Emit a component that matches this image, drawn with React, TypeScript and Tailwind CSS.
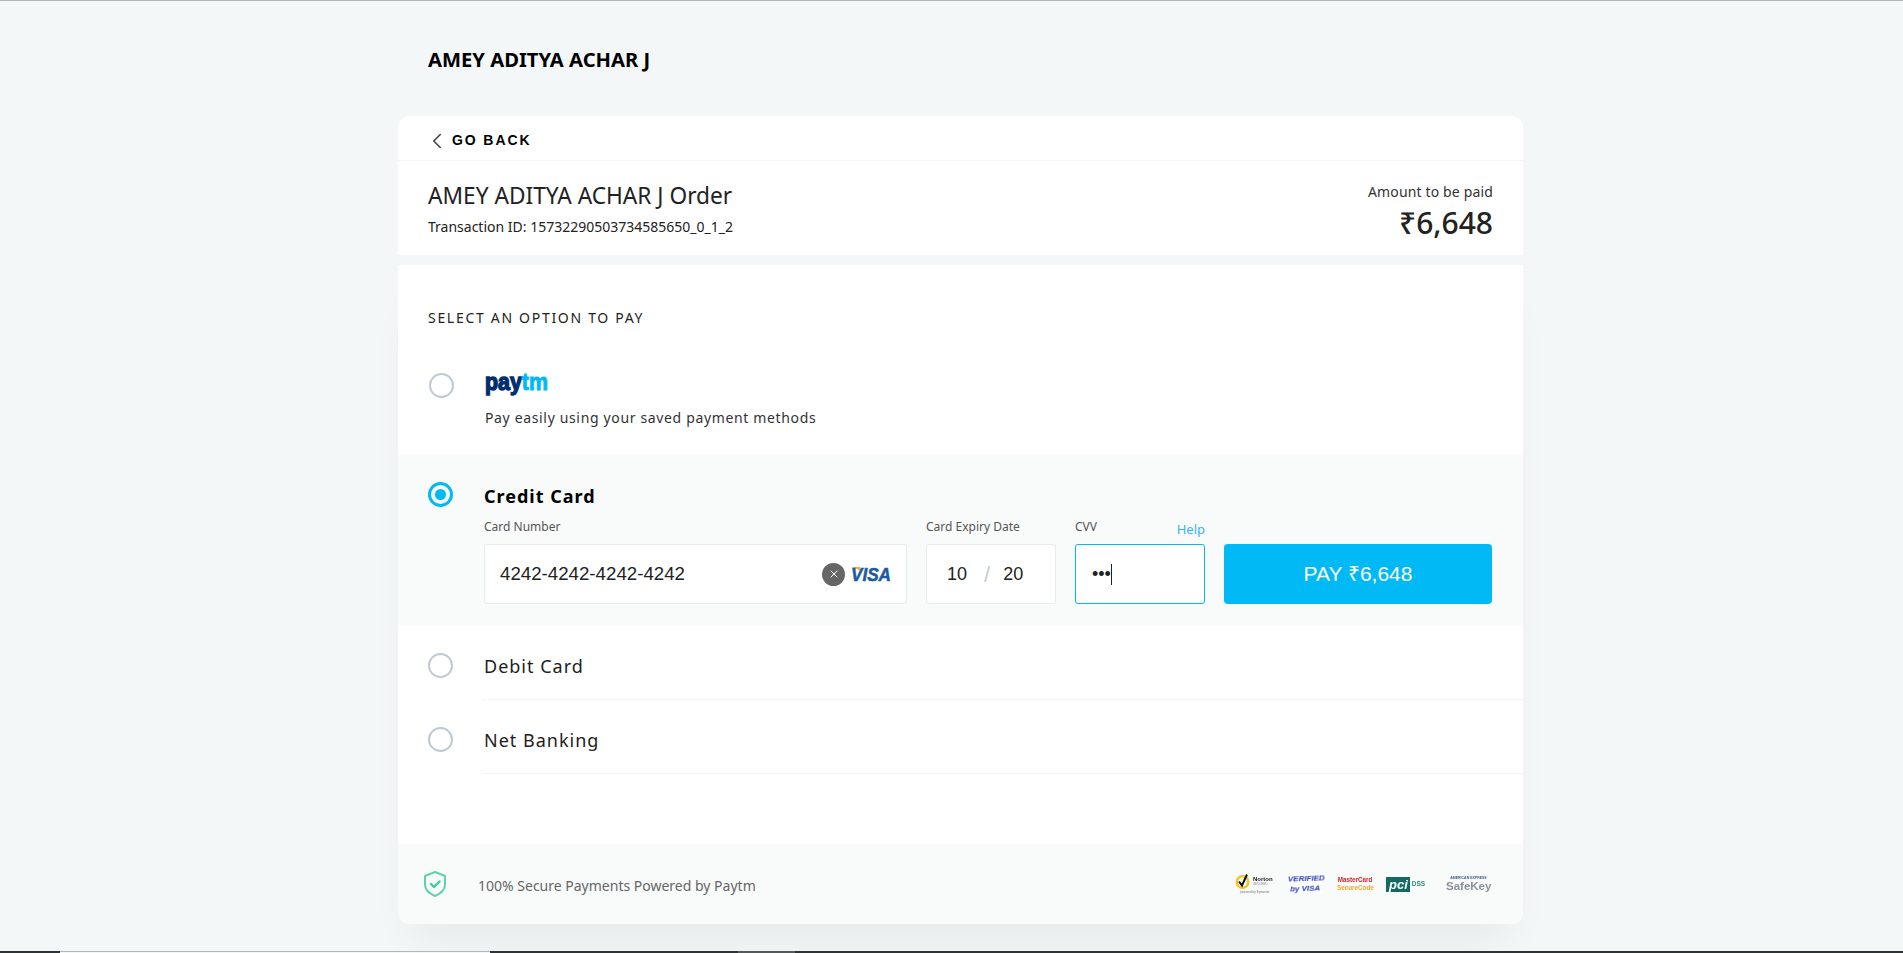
import { ChevronLeft, X } from "lucide-react";

function Radio({ checked = false }: { checked?: boolean }) {
  return (
    <span
      className={
        checked
          ? "flex h-[25px] w-[25px] shrink-0 items-center justify-center rounded-full border-[3px] border-[#00b9f5]"
          : "block h-[25px] w-[25px] shrink-0 rounded-full border-[2px] border-[#bfc9d4]"
      }
    >
      {checked && <span className="h-[11px] w-[11px] rounded-full bg-[#00b9f5]" />}
    </span>
  );
}

function PaytmLogo() {
  return (
    <svg width="66" height="22" viewBox="0 0 66 22" className="block overflow-visible">
      <text x="1" y="16" fontFamily="'Liberation Sans', sans-serif" fontWeight="700" fontSize="23" textLength="63" lengthAdjust="spacingAndGlyphs">
        <tspan fill="#002e6e" stroke="#002e6e" strokeWidth="1.4">pay</tspan>
        <tspan fill="#00b9f5" stroke="#00b9f5" strokeWidth="0.9">tm</tspan>
      </text>
    </svg>
  );
}

function VisaLogo() {
  return (
    <svg width="42" height="18" viewBox="0 0 42 18" className="overflow-visible">
      <path d="M1 2h9l1.5 5C9 4.5 5 3 1 2z" fill="#f2a93b" />
      <text x="1" y="16" fontFamily="'Liberation Sans', sans-serif" fontWeight="700" fontStyle="italic" fontSize="18" textLength="40" lengthAdjust="spacingAndGlyphs" fill="#1a5b9e" stroke="#1a5b9e" strokeWidth="0.5">VISA</text>
    </svg>
  );
}

function ShieldCheck() {
  return (
    <svg width="24" height="28" viewBox="0 0 24 28" fill="none">
      <path d="M12 2 22 6v8.5c0 5.5-4 9-10 11.5C6 23.5 2 20 2 14.5V6z" stroke="#5fd3a5" strokeWidth="2" strokeLinejoin="round" />
      <path d="m8 14 3 3 5.5-5.5" stroke="#3ecb90" strokeWidth="2.4" strokeLinecap="round" strokeLinejoin="round" />
    </svg>
  );
}

function NortonSeal() {
  return (
    <div className="w-[42px] blur-[0.5px]">
      <div className="flex items-center gap-[2px]">
        <svg width="17" height="17" viewBox="0 0 17 17" className="shrink-0">
          <circle cx="8.5" cy="9" r="7" fill="#f7c325" />
          <circle cx="8.5" cy="9" r="4.5" fill="#fff" />
          <path d="m5 8.5 3 4 5-11" stroke="#111" strokeWidth="2" fill="none" />
        </svg>
        <div className="leading-[5px]">
          <div className="text-[6px] font-bold text-[#222]">Norton</div>
          <div className="text-[3px] text-[#888]">SECURED</div>
        </div>
      </div>
      <div className="text-center text-[3px] leading-[5px] text-[#777]">powered by Symantec</div>
    </div>
  );
}

function TrustSeals() {
  return (
    <div className="flex items-center font-['Liberation_Sans',sans-serif]">
      <NortonSeal />
      <div className="ml-[12px] w-[34px] rotate-[-2deg] bg-white text-center text-[8px] leading-[10px] font-bold text-[#2a3bb0] italic blur-[0.5px]">
        <div>VERIFIED</div>
        <div>by VISA</div>
      </div>
      <div className="ml-[15px] w-[36px] text-center text-[6.3px] leading-[8px] font-bold blur-[0.5px]">
        <div className="text-[#d8222a]">MasterCard</div>
        <div className="text-[#f5a623]">SecureCode</div>
      </div>
      <div className="ml-[13px] flex w-[44px] items-center blur-[0.5px]">
        <span className="bg-[#116b63] pr-[2px] pl-[3px] text-[13px] leading-[15px] font-bold text-white italic">pci</span>
        <span className="ml-[2px] text-[6.5px] font-bold text-[#2f8a80]">DSS</span>
      </div>
      <div className="ml-[16px] w-[45px] text-center blur-[0.5px]">
        <div className="text-[3.5px] leading-[4px] font-bold text-[#3b5b8c]">AMERICAN EXPRESS</div>
        <div className="text-[11.5px] leading-[12px] font-bold text-[#8a9299]">SafeKey</div>
      </div>
    </div>
  );
}

function OptionRow({ label, first = false }: { label: string; first?: boolean }) {
  return (
    <div className="flex">
      <div className={`flex w-[84px] shrink-0 items-center pl-[30px] ${first ? "pt-[6px]" : "pt-[4px]"}`}>
        <Radio />
      </div>
      <div className={`flex flex-1 items-center border-b border-[#f3f5f6] pl-[2px] ${first ? "h-[75px] pt-[9px]" : "h-[74px] pt-[7px]"}`}>
        <span className="text-[18px] tracking-[1px] text-[#1d1d1d]">{label}</span>
      </div>
    </div>
  );
}

export default function App() {
  return (
    <div className="relative h-[953px] overflow-hidden border-t border-[#b4b6b8] bg-[#f3f7f8] font-['Noto_Sans',sans-serif] text-[#222222]">
      <div className="ml-[398px] w-[1125px]">
        <div className="flex h-[115px] items-start pt-[45px] pl-[30px]">
          <h1 className="text-[20.2px] leading-[26px] font-bold text-black">AMEY ADITYA ACHAR J</h1>
        </div>

        <div className="rounded-t-[12px] bg-white">
          <div className="flex h-[45px] items-center border-b border-[#f3f5f6] pt-[5px] pl-[26px]">
            <ChevronLeft size={26} strokeWidth={1.5} className="text-[#444444]" />
            <span className="ml-[2px] font-['Liberation_Sans',sans-serif] text-[14px] font-bold tracking-[1.9px] text-black">GO BACK</span>
          </div>
          <div className="flex h-[94px] justify-between px-[30px] pt-[21px]">
            <div>
              <div className="text-[22.7px] leading-[28px] text-[#222222]">AMEY ADITYA ACHAR J Order</div>
              <div className="mt-[7px] text-[14px] leading-[20px] text-[#222222]">Transaction ID: 15732290503734585650_0_1_2</div>
            </div>
            <div className="text-right">
              <div className="text-[14px] leading-[20px] tracking-[0.15px] text-[#333333]">Amount to be paid</div>
              <div className="mt-[3px] text-[30px] leading-[36px] font-medium text-[#222222]">₹6,648</div>
            </div>
          </div>
        </div>

        <div className="mt-[10px] flex h-[659px] flex-col rounded-b-[12px] bg-white shadow-[0_30px_40px_-15px_rgba(0,0,0,0.06)]">
          <div className="pt-[43px] pl-[30px] text-[14px] leading-[20px] tracking-[1.7px] text-[#222222]">SELECT AN OPTION TO PAY</div>

          <div className="mt-[44px] flex h-[83px]">
            <div className="w-[86px] shrink-0 pt-[1px] pl-[31px]">
              <Radio />
            </div>
            <div className="pt-[2px]">
              <PaytmLogo />
              <div className="mt-[12px] pl-[1px] text-[14px] leading-[20px] tracking-[0.65px] text-[#333333]">Pay easily using your saved payment methods</div>
            </div>
          </div>

          <div className="flex h-[170px] bg-[#f9fbfb]">
            <div className="w-[86px] shrink-0 pt-[27px] pl-[30px]">
              <Radio checked />
            </div>
            <div className="flex-1 pt-[29px] pr-[31px]">
              <div className="text-[18px] leading-[24px] font-bold tracking-[1px] text-black">Credit Card</div>
              <div className="mt-[10px] flex items-start">
                <div className="w-[423px]">
                  <div className="text-[12px] leading-[18px] text-[#555555]">Card Number</div>
                  <div className="mt-[8px] flex h-[60px] items-center rounded-[3px] border border-[#e8ebec] bg-white pr-[14px] pl-[15px]">
                    <span className="flex-1 font-['Liberation_Sans',sans-serif] text-[18.7px] text-[#222222]">4242-4242-4242-4242</span>
                    <span className="flex h-[23px] w-[23px] items-center justify-center rounded-full bg-[#666666] text-white">
                      <X size={12} strokeWidth={2} />
                    </span>
                    <span className="ml-[5px]"><VisaLogo /></span>
                  </div>
                </div>
                <div className="ml-[19px] w-[130px]">
                  <div className="text-[12px] leading-[18px] text-[#555555]">Card Expiry Date</div>
                  <div className="mt-[8px] flex h-[60px] items-center rounded-[3px] border border-[#e8ebec] bg-white pl-[20px] font-['Liberation_Sans',sans-serif] text-[18px] text-[#222222]">
                    <span>10</span>
                    <span className="ml-[17px] text-[22px] text-[#c3ccd6]">/</span>
                    <span className="ml-[13px]">20</span>
                  </div>
                </div>
                <div className="ml-[19px] w-[130px]">
                  <div className="flex justify-between">
                    <span className="text-[12px] leading-[18px] text-[#555555]">CVV</span>
                    <span className="mt-[2px] text-[13px] leading-[18px] text-[#37b4f0]">Help</span>
                  </div>
                  <div className="mt-[6px] flex h-[60px] items-center rounded-[3px] border border-[#00b9f5] bg-white pl-[16px]">
                    <span className="font-['Liberation_Sans',sans-serif] text-[18px] leading-none text-[#222222]">•••</span>
                    <span className="h-[21px] w-[1px] bg-[#222222]" />
                  </div>
                </div>
                <div className="ml-[19px] flex-1 pt-[26px]">
                  <button className="h-[60px] w-full rounded-[4px] bg-[#00b9f5] font-['Liberation_Sans',sans-serif] text-[21px] text-white">PAY ₹6,648</button>
                </div>
              </div>
            </div>
          </div>

          <OptionRow label="Debit Card" first />
          <OptionRow label="Net Banking" />

          <div className="mt-auto flex h-[80px] items-center rounded-b-[12px] bg-[#f9fbfb] pr-[32px] pl-[25px]">
            <ShieldCheck />
            <span className="ml-[31px] pt-[2px] text-[14px] text-[#666666]">100% Secure Payments Powered by Paytm</span>
            <div className="ml-auto">
              <TrustSeals />
            </div>
          </div>
        </div>
      </div>

      <div className="absolute right-0 bottom-0 left-0 flex h-[2px] bg-[#2f3335]">
        <div className="ml-[60px] h-full w-[430px] border-t border-[#b4b6b8] bg-[#f3f7f8]" />
        <div className="ml-[248px] h-full w-[57px] bg-[#55595b]" />
      </div>
    </div>
  );
}
